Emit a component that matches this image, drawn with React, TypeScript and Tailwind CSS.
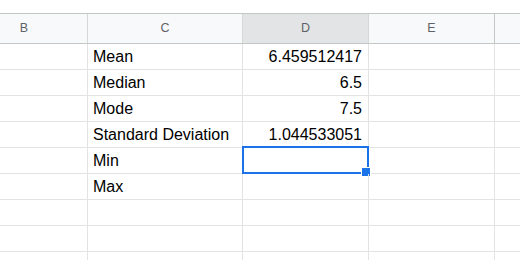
import React from "react";

const rows: [string, string][] = [
  ["Mean", "6.459512417"],
  ["Median", "6.5"],
  ["Mode", "7.5"],
  ["Standard Deviation", "1.044533051"],
  ["Min", ""],
  ["Max", ""],
  ["", ""],
  ["", ""],
  ["", ""],
];

export default function App() {
  return (
    <div
      className="w-[520px] h-[260px] overflow-hidden bg-white"
      style={{ fontFamily: '"Liberation Sans", Arial, sans-serif' }}
    >
      <div className="h-[13px]" />
      <div className="ml-[-39px] w-[600px]">
        <div className="grid grid-cols-[127px_155px_126px_126px_126px] h-[31px] border-y border-[#c4c7c5] bg-[#f8f9fa] text-[12.5px] text-[#5f6368]">
          <div className="flex items-center justify-center border-r border-[#d6d7d7]">B</div>
          <div className="flex items-center justify-center border-r border-[#d6d7d7]">C</div>
          <div className="flex items-center justify-center border-r border-[#d6d7d7] bg-[#e3e4e6]">D</div>
          <div className="flex items-center justify-center border-r border-[#c4c7c5]">E</div>
          <div className="flex items-center justify-center" />
        </div>
        {rows.map(([label, value], i) => (
          <div
            key={i}
            className="grid grid-cols-[127px_155px_126px_126px_126px] h-[26px] border-b border-[#e2e3e3] text-[16px] text-black leading-[18px]"
          >
            <div className="border-r border-[#e2e3e3]" />
            <div className="flex items-end pl-[5px] pb-[3px] border-r border-[#e2e3e3] whitespace-nowrap">
              {label}
            </div>
            <div className="relative flex items-end justify-end pr-[6px] pb-[3px] border-r border-[#e2e3e3]">
              {value}
              {i === 4 && (
                <>
                  <div className="absolute left-[-1px] top-[-2px] right-[-1px] bottom-[-1px] border-2 border-[#1a73e8]" />
                  <div className="absolute right-[-3px] bottom-[-4px] w-[10px] h-[10px] bg-[#1a73e8] border border-white" />
                </>
              )}
            </div>
            <div className="border-r border-[#e2e3e3]" />
            <div />
          </div>
        ))}
      </div>
    </div>
  );
}
